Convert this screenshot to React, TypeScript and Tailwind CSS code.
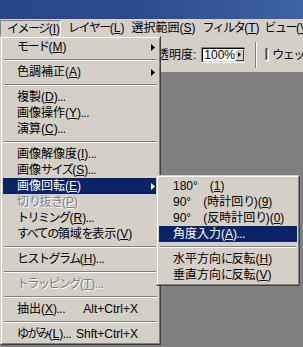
import React from "react";

type Item =
  | { sep: true }
  | {
      sep?: false;
      label: string;
      key?: string;
      after?: string;
      shortcut?: string;
      arrow?: boolean;
      active?: boolean;
      disabled?: boolean;
    };

const mainItems: Item[] = [
  { label: "モード(", key: "M", after: ")", arrow: true },
  { sep: true },
  { label: "色調補正(", key: "A", after: ")", arrow: true },
  { sep: true },
  { label: "複製(", key: "D", after: ")..." },
  { label: "画像操作(", key: "Y", after: ")..." },
  { label: "演算(", key: "C", after: ")..." },
  { sep: true },
  { label: "画像解像度(", key: "I", after: ")..." },
  { label: "画像サイズ(", key: "S", after: ")..." },
  { label: "画像回転(", key: "E", after: ")", arrow: true, active: true },
  { label: "切り抜き(", key: "P", after: ")", disabled: true },
  { label: "トリミング(", key: "R", after: ")..." },
  { label: "すべての領域を表示(", key: "V", after: ")" },
  { sep: true },
  { label: "ヒストグラム(", key: "H", after: ")..." },
  { sep: true },
  { label: "トラッピング(", key: "T", after: ")...", disabled: true },
  { sep: true },
  { label: "抽出(", key: "X", after: ")...", shortcut: "Alt+Ctrl+X" },
  { sep: true },
  { label: "ゆがみ(", key: "L", after: ")...", shortcut: "Shft+Ctrl+X" },
];

const rotateItems: Item[] = [
  { label: "180°　(", key: "1", after: ")" },
  { label: "90°　(時計回り)(", key: "9", after: ")" },
  { label: "90°　(反時計回り)(", key: "0", after: ")" },
  { label: "角度入力(", key: "A", after: ")...", active: true },
  { sep: true },
  { label: "水平方向に反転(", key: "H", after: ")" },
  { label: "垂直方向に反転(", key: "V", after: ")" },
];

// kana in the old bitmap UI font are narrower than kanji, so tighten kana runs
function Jp({ text }: { text: string }) {
  const runs = text.match(/[\u3040-\u30ff]+|[^\u3040-\u30ff]+/g) ?? [];
  return (
    <>
      {runs.map((r, i) =>
        /[\u3040-\u30ff]/.test(r) ? (
          <span key={i} className="tracking-[-1.5px]">
            {r}
          </span>
        ) : (
          <span key={i}>{r}</span>
        )
      )}
    </>
  );
}

function Arrow({ white }: { white?: boolean }) {
  return (
    <svg width="4" height="7" viewBox="0 0 4 7" className="shrink-0">
      <polygon points="0,0 4,3.5 0,7" fill={white ? "#ffffff" : "#000000"} />
    </svg>
  );
}

function Menu({ items, className }: { items: Item[]; className: string }) {
  return (
    <div className={`absolute border border-t-[#d4d0c8] border-l-[#d4d0c8] border-r-[#404040] border-b-[#404040] ${className}`}>
      <div className="border border-t-white border-l-white border-r-[#808080] border-b-[#808080] bg-[#d4d0c8] p-[1px]">
        {items.map((it, i) =>
          it.sep ? (
            <div key={i} className="h-[9px] pt-[4px] px-[1px]">
              <div className="h-[2px] border-t border-b border-t-[#808080] border-b-white" />
            </div>
          ) : (
            <div
              key={i}
              className={`flex h-[16px] items-center pl-[14px] pr-[3px] whitespace-nowrap leading-[16px] ${
                it.active ? "bg-[#0a246a] text-white" : it.disabled ? "text-[#808080] [text-shadow:1px_1px_0_#ffffff]" : "text-black"
              }`}
            >
              <span>
                <Jp text={it.label} />
                <span className="underline underline-offset-[1px]">{it.key}</span>
                <span className="tracking-[-0.5px]">{it.after}</span>
              </span>
              <span className="flex-1" />
              {it.shortcut && <span className="pr-[17px]">{it.shortcut}</span>}
              {it.arrow && <Arrow white={it.active} />}
            </div>
          )
        )}
      </div>
    </div>
  );
}

export default function App() {
  return (
    <div className="relative h-[347px] w-[303px] overflow-hidden bg-[#808080] font-['Liberation_Sans','Noto_Sans_CJK_JP',sans-serif] text-[12px] text-black">
      {/* title bar */}
      <div className="h-[19px] bg-gradient-to-r from-[#27458a] via-[#2d4d91] to-[#3f61a5]" />

      {/* menu bar */}
      <div className="flex h-[18px] items-center bg-[#d4d0c8] leading-[16px] whitespace-nowrap">
        <div className="h-[17px] w-[62px] border border-t-[#808080] border-l-[#808080] border-r-white border-b-white pl-[6px]">
          <Jp text="イメージ(" />
          <span className="underline">I</span>)
        </div>
        <div className="w-[65px] pl-[7px]">
          <Jp text="レイヤー(" />
          <span className="underline">L</span>)
        </div>
        <div className="w-[77px] pl-[7px]">
          選択範囲(<span className="underline">S</span>)
        </div>
        <div className="w-[62px] pl-[7px]">
          <Jp text="フィルタ(" />
          <span className="underline">T</span>)
        </div>
        <div className="pl-[7px]">
          <Jp text="ビュー(" />
          <span className="underline">V</span>)
        </div>
      </div>

      {/* options bar */}
      <div className="flex h-[35px] items-center bg-[#d4d0c8] pl-[157px] whitespace-nowrap">
        <span className="mr-[5px]">透明度:</span>
        <div className="flex h-[16px] w-[44px] items-center border border-t-[#808080] border-l-[#808080] border-r-white border-b-white">
          <div className="flex h-full flex-1 items-center border border-t-black border-l-black border-r-[#d4d0c8] border-b-[#d4d0c8] bg-white pl-[1px] leading-[12px]">
            <span className="flex-1">100%</span>
            <div className="flex h-[12px] w-[9px] items-center justify-center border border-t-white border-l-white border-r-[#404040] border-b-[#404040] bg-[#d4d0c8]">
              <svg width="3" height="5" viewBox="0 0 3 5">
                <polygon points="0,0 3,2.5 0,5" fill="#000" />
              </svg>
            </div>
          </div>
        </div>
        <div className="ml-[10px] mr-[8px] h-[26px] w-[2px] border-l border-r border-l-[#808080] border-r-white" />
        <div className="h-[13px] w-[13px] border border-t-[#808080] border-l-[#808080] border-r-white border-b-white">
          <div className="h-full w-full border border-t-[#404040] border-l-[#404040] border-r-[#d4d0c8] border-b-[#d4d0c8] bg-white" />
        </div>
        <span className="ml-[3px]">
          <Jp text="ウェット" />
        </span>
      </div>

      {/* image menu */}
      <Menu items={mainItems} className="left-0 top-[36px] w-[161px]" />
      {/* rotate submenu */}
      <Menu items={rotateItems} className="left-[156px] top-[175px] w-[144px]" />
    </div>
  );
}
